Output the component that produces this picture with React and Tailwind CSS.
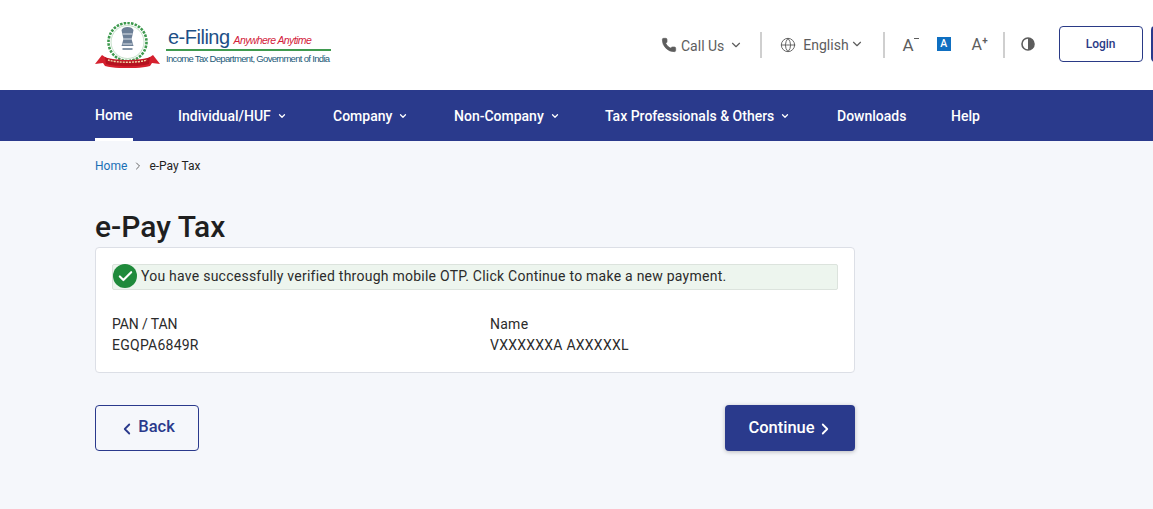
import { ChevronDown, ChevronLeft, ChevronRight, Check, Globe, Phone } from "lucide-react";

const navItems = [
  { label: "Individual/HUF", menu: true, className: "w-[155px]" },
  { label: "Company", menu: true, className: "w-[121px]" },
  { label: "Non-Company", menu: true, className: "w-[151px]" },
  { label: "Tax Professionals & Others", menu: true, className: "w-[232px]" },
  { label: "Downloads", className: "w-[114px]" },
  { label: "Help", className: "" },
];

function Emblem() {
  return (
    <svg width="68" height="46" viewBox="0 0 68 46" className="shrink-0">
      <circle cx="32.5" cy="20" r="19" fill="none" stroke="#3f9a4f" strokeWidth="2.6" strokeDasharray="2.5 1.2" />
      <circle cx="32.5" cy="20" r="16.5" fill="#fff" stroke="#9ccaa2" strokeWidth="0.6" />
      <path d="M26.5 8c1-2 3-3 6-3s5 1 6 3l-1 5-1 4 2 7h-12l2-7-1-4z" fill="#6c7f96" />
      <path d="M27.5 12h10M28.5 17h8M27.5 22h10" stroke="#dfe5ea" strokeWidth="1" />
      <rect x="27.5" y="26" width="10" height="2" fill="#8796a8" />
      <path d="M0 42l7-9 3 2c8 4 37 4 45 0l3-2 7 9-8-1-2 3c-12 3-33 3-45 0l-2-3z" fill="#d5202e" />
      <path d="M10 35c8 5 37 5 45 0l-1 7c-10 3-33 3-43 0z" fill="#b5121f" />
      <path d="M13 38c10 3 29 3 39 0" stroke="#f3d9a8" strokeWidth="1.4" strokeDasharray="2 1" fill="none" />
    </svg>
  );
}

function Logo() {
  return (
    <div className="flex items-center w-[236px]">
      <Emblem />
      <div className="ml-[3px] flex flex-col font-['Liberation_Sans',sans-serif]">
        <div className="flex items-baseline h-[24px] pl-[2px]">
          <span className="text-[20px] leading-[25px] tracking-[-0.5px] text-[#1d4f86]">e-Filing</span>
          <span className="ml-[4px] text-[10.5px] italic tracking-[-0.6px] text-[#d3213a]">Anywhere Anytime</span>
        </div>
        <div className="h-[2px] w-[165px] bg-[#3f9a4f]" />
        <div className="mt-[1px] text-[9.5px] leading-[14px] tracking-[-0.68px] whitespace-nowrap text-[#235a78]">
          Income Tax Department, Government of India
        </div>
      </div>
    </div>
  );
}

function Divider() {
  return <div className="h-[26px] w-[2px] bg-[#cfcfcf]" />;
}

function Header() {
  return (
    <header className="h-[90px] bg-white pl-[95px] flex items-center overflow-hidden">
      <Logo />
      <div className="ml-[330px] flex items-center text-[#5d5d5d] text-[14px] shrink-0">
        <Phone size={16} fill="#5d5d5d" strokeWidth={1} />
        <span className="ml-[4px] mt-[2px]">Call Us</span>
        <ChevronDown size={14} strokeWidth={2} className="ml-[5px]" />
        <div className="ml-[17px]"><Divider /></div>
        <Globe size={16} strokeWidth={1.4} className="ml-[18px]" />
        <span className="ml-[7px]">English</span>
        <ChevronDown size={14} strokeWidth={2} className="ml-[1px] -mt-[3px]" />
        <div className="ml-[19px]"><Divider /></div>
        <span className="ml-[18px] relative w-[16px] text-[17px] leading-none">
          A
          <span className="absolute right-0 top-[1px] h-[1.5px] w-[5px] bg-[#5d5d5d]" />
        </span>
        <span className="ml-[18px] -mt-[2px] flex h-[14px] w-[14px] items-center justify-center bg-[#0f6fc1] text-[10.5px] font-medium text-white">
          A
        </span>
        <span className="ml-[21px] relative w-[16px] text-[16px] leading-none">
          A
          <span className="absolute right-0 -top-[1px] text-[10px] font-bold leading-none">+</span>
        </span>
        <div className="ml-[15px]"><Divider /></div>
        <svg width="14" height="14" viewBox="0 0 14 14" className="ml-[16px] -mt-[2px]">
          <circle cx="7" cy="7" r="6" fill="none" stroke="#5d5d5d" strokeWidth="1.6" />
          <path d="M7 1a6 6 0 0 1 0 12z" fill="#5d5d5d" />
        </svg>
        <button className="ml-[24px] -mt-[2px] h-[36px] w-[84px] rounded-[4px] border border-[#2a3a86] bg-white text-[12px] font-medium text-[#2a3a86]">
          Login
        </button>
        <div className="ml-[8px] -mt-[2px] h-[36px] w-[84px] rounded-[4px] bg-[#2a3a8c]" />
      </div>
    </header>
  );
}

function Nav() {
  return (
    <nav className="h-[51px] bg-[#2a3a8c] pl-[95px] flex text-[14px] font-medium text-white">
      <a className="w-[83px] relative flex items-center h-full">
        <span className="-mt-[1px]">Home</span>
        <span className="absolute left-0 bottom-0 h-[3px] w-[38px] bg-white" />
      </a>
      {navItems.map((item) => (
        <a key={item.label} className={`flex items-center h-full shrink-0 whitespace-nowrap ${item.className}`}>
          <span className="mt-[1px]">{item.label}</span>
          {item.menu && <ChevronDown size={10} strokeWidth={3} className="ml-[6px] mt-[1px]" />}
        </a>
      ))}
    </nav>
  );
}

function App() {
  return (
    <div className="h-[509px] w-[1153px] overflow-hidden bg-[#f5f7fb] font-['Roboto',sans-serif]">
      <Header />
      <Nav />
      <main className="pl-[95px] w-[855px] box-content">
        <div className="flex items-center h-[49px] text-[12px] tracking-[0.02px]">
          <span className="text-[#1a6fb5]">Home</span>
          <ChevronRight size={12} className="mx-[5px] text-[#666]" />
          <span className="text-[#1f1f1f]">e-Pay Tax</span>
        </div>
        <h1 className="mt-[19px] text-[30px] leading-[36px] font-medium text-[#1f1f1f]">e-Pay Tax</h1>
        <section className="mt-[2px] h-[126px] w-[760px] rounded-[4px] border border-[#dcdfe6] bg-white pl-[16px] pr-[16px] pt-[16px]">
          <div className="relative h-[26px] w-[726px] rounded-[2px] border border-[#dce3dd] bg-[#edf5ee] pl-[28px] text-[14px] leading-[23px] tracking-[0.245px] text-[#2b2b2b]">
            <span className="absolute left-0 -top-[1px] flex h-[24px] w-[24px] items-center justify-center rounded-full bg-[#1f8a3b]">
              <Check size={17} strokeWidth={3} className="text-white" />
            </span>
            You have successfully verified through mobile OTP. Click Continue to make a new payment.
          </div>
          <div className="mt-[24px] flex text-[14px] leading-[21px] tracking-[0.25px] text-[#2b2b2b]">
            <div className="w-[378px]">
              <div className="tracking-[-0.1px]">PAN / TAN</div>
              <div>EGQPA6849R</div>
            </div>
            <div>
              <div>Name</div>
              <div>VXXXXXXA AXXXXXL</div>
            </div>
          </div>
        </section>
        <div className="mt-[32px] flex w-[760px] justify-between">
          <button className="flex h-[46px] w-[104px] items-center justify-center rounded-[4px] border border-[#2a3a8c] pr-[1px] text-[16.5px] font-medium text-[#2a3a8c]">
            <ChevronLeft size={18} strokeWidth={2.4} className="mr-[2px] mt-[2px]" />
            <span className="-mt-[2px]">Back</span>
          </button>
          <button className="flex h-[46px] w-[130px] items-center justify-center rounded-[4px] bg-[#2a3a8c] pl-[2px] text-[16.5px] font-medium text-white shadow-[0_1px_4px_rgba(0,0,0,0.25)]">
            Continue
            <ChevronRight size={18} strokeWidth={2.4} className="ml-[1px] mt-[1px]" />
          </button>
        </div>
      </main>
    </div>
  );
}

export default App;
